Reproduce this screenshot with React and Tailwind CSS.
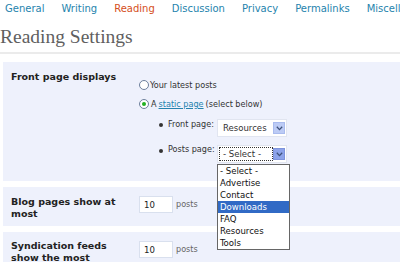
import React from 'react';

const nav = ['General', 'Writing', 'Reading', 'Discussion', 'Privacy', 'Permalinks', 'Miscellaneous'];
const pages = ['- Select -', 'Advertise', 'Contact', 'Downloads', 'FAQ', 'Resources', 'Tools'];

const body = "font-['DejaVu_Sans_Condensed','DejaVu_Sans',sans-serif]";
const label = "font-['DejaVu_Sans',sans-serif] font-bold text-[9.5px] leading-[12px] text-[#222]";

const Arrow = ({ hover }) => (
  <span className={`w-[12px] h-[12px] flex items-center justify-center border ${hover ? 'bg-[#8da3ea] border-[#7d93dc]' : 'bg-[#bccbf5] border-[#a9bbee]'}`}>
    <svg width="7" height="5" viewBox="0 0 7 5"><path d="M0.8 0.8 L3.5 3.6 L6.2 0.8" fill="none" stroke="#3e517a" strokeWidth="1.3" /></svg>
  </span>
);

const Radio = ({ checked }) => (
  <span className="w-[10px] h-[10px] rounded-full border border-[#6d7f9c] bg-white flex items-center justify-center shrink-0">
    {checked && <span className="w-[4px] h-[4px] rounded-full bg-[#22b022]" />}
  </span>
);

const App = () => {
  return (
    <div className="w-[400px] h-[262px] overflow-hidden bg-white relative">
      <div className="flex gap-[17px] pl-[5px] pt-[3px] whitespace-nowrap font-['DejaVu_Sans',sans-serif] text-[10px] leading-[12px]">
        {nav.map(n => (
          <span key={n} className={n === 'Reading' ? 'text-[#d54e21]' : 'text-[#2583ad]'}>{n}</span>
        ))}
      </div>
      <h2 className="mt-[10px] font-['Liberation_Serif',serif] text-[19.5px] leading-[24px] text-[#5f5f5f]">Reading Settings</h2>
      <div className="mt-[3px] h-[2px] bg-[#ebebeb]" />

      <div className="ml-[3px] mt-[8px] bg-[#eef1fc] flex h-[119px]">
        <div className={`w-[136px] shrink-0 pl-[8px] pt-[9px] ${label}`}>Front page displays</div>
        <div className={`pt-[16px] whitespace-nowrap ${body} text-[9px] leading-[14px] text-[#333]`}>
          <div className="flex items-center gap-[1px]"><Radio />Your latest posts</div>
          <div className="flex items-center gap-[2px] mt-[5px]"><Radio checked />A <span className="text-[#2583ad] underline">static page</span> (select below)</div>
          <div className="flex items-start mt-[8px] pl-[20px]">
            <span className="w-[4px] h-[4px] rounded-full bg-[#333] mt-[4px] mr-[5px] shrink-0" />
            <span className="w-[49px] leading-[12px] -mt-[1px]">Front page:</span>
            <div className="w-[70px] h-[18px] bg-white border border-[#e1e5f0] flex items-center justify-between pl-[5px] pr-[1px] text-[9.5px]">
              <span>Resources</span><Arrow />
            </div>
          </div>
          <div className="flex items-start mt-[8px] pl-[20px] relative">
            <span className="w-[4px] h-[4px] rounded-full bg-[#333] mt-[4px] mr-[5px] shrink-0" />
            <span className="w-[49px] leading-[12px] -mt-[2px]">Posts page:</span>
            <div className="w-[70px] h-[18px] bg-white border border-[#e1e5f0] flex items-center justify-between pl-[1px] pr-[1px] text-[9.5px]">
              <span className="h-[14px] w-[54px] border border-dotted border-[#333] flex items-center pl-[3px]">- Select -</span><Arrow hover />
            </div>
            <div className="absolute left-[78px] top-[19px] w-[73px] bg-white border border-[#666] z-10">
              {pages.map(p => (
                <div key={p} className={`h-[12px] leading-[12px] pl-[2px] text-[9.5px] ${p === 'Downloads' ? 'bg-[#316ac5] text-white' : 'text-[#111]'}`}>{p}</div>
              ))}
            </div>
          </div>
        </div>
      </div>

      <div className="ml-[3px] mt-[6px] bg-[#eef1fc] flex h-[39px]">
        <div className={`w-[136px] shrink-0 pl-[8px] pr-[16px] pt-[9px] ${label}`}>Blog pages show at most</div>
        <div className={`pt-[9px] flex items-center gap-[3px] h-[17px] box-content ${body} text-[9px]`}>
          <span className="w-[34px] h-[17px] bg-white border border-[#d9e0ee] pl-[4px] leading-[15px] text-[#222] text-[9.5px]">10</span>
          <span className="text-[#666]">posts</span>
        </div>
      </div>

      <div className="ml-[3px] mt-[6px] bg-[#eef1fc] flex h-[40px]">
        <div className={`w-[136px] shrink-0 pl-[8px] pr-[16px] pt-[8px] ${label}`}>Syndication feeds show the most</div>
        <div className={`pt-[9px] flex items-center gap-[3px] h-[17px] box-content ${body} text-[9px]`}>
          <span className="w-[34px] h-[17px] bg-white border border-[#d9e0ee] pl-[4px] leading-[15px] text-[#222] text-[9.5px]">10</span>
          <span className="text-[#666]">posts</span>
        </div>
      </div>
    </div>
  );
};

export default App;
